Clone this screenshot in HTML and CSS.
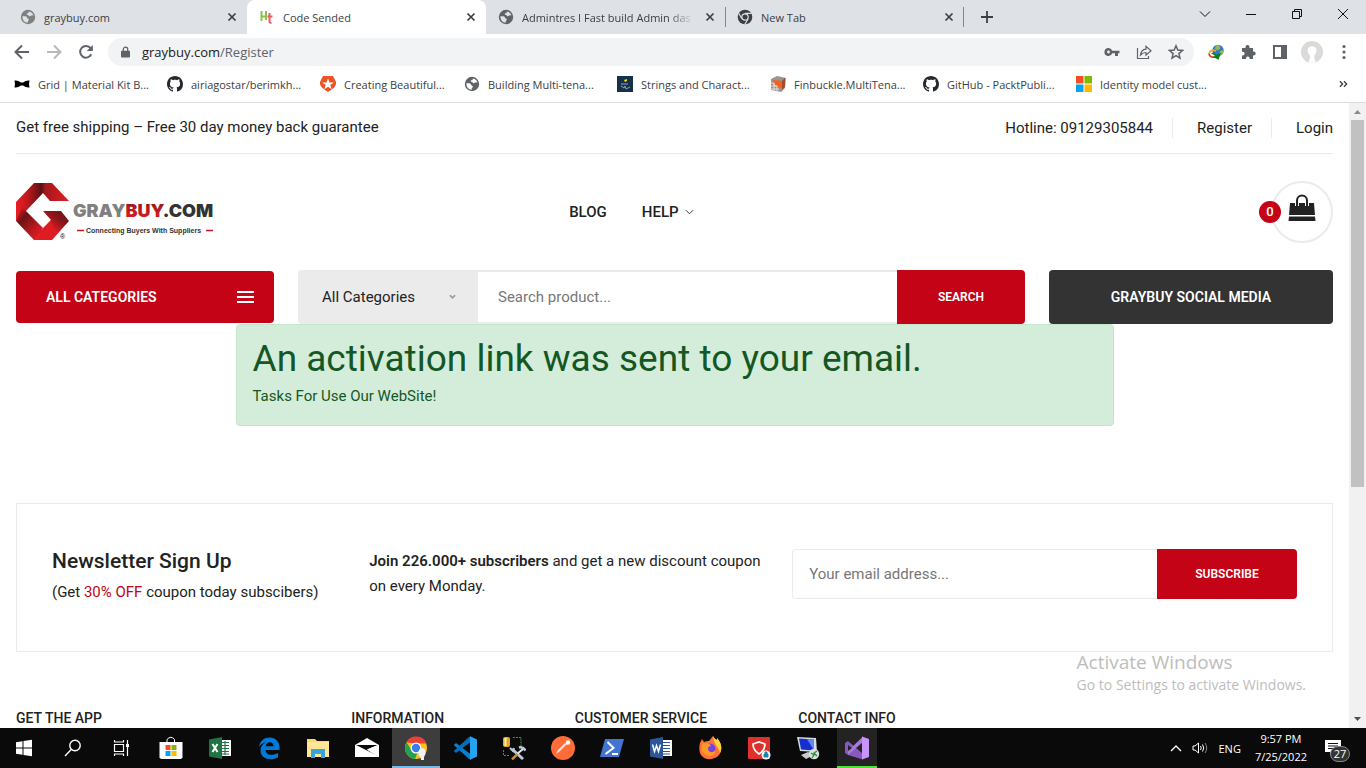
FILE: index.html
```html
<!DOCTYPE html>
<html lang="en">
<head>
    <meta charset="UTF-8">
    <meta name="viewport" content="width=device-width, initial-scale=1.0">
    <title>Code Sended</title>
    <link rel="stylesheet" href="styles.css">
</head>
<body>
    <!-- Shared icons -->
    <svg class="sprite" aria-hidden="true">
        <symbol id="globe" viewBox="0 0 16 16">
            <circle cx="8" cy="8" r="7.2" fill="currentColor"/>
            <path d="M2.300 7.200h3.200q1.500 0 1.500 1.500 0 .8 1 .8.800.2.800 1.200t-1 1.300v1.800Q2.600 13.600 2.300 7.200zM8.800 2.400q3.600.4 4.700 4.100-1.300-.7-2.300 0-.7 1-2.200.7-.2-1-1.200-1.100-1.300-.3-1-1.500.8-.7 1.800-.7z" fill="var(--hole)"/>
        </symbol>
        <symbol id="close" viewBox="0 0 10 10">
            <path d="M1.500 1.500l7 7M8.500 1.500l-7 7" stroke="currentColor" stroke-width="1.700" fill="none"/>
        </symbol>
        <symbol id="github" viewBox="0 0 16 16">
            <path fill="currentColor" d="M8 0C3.580 0 0 3.580 0 8c0 3.540 2.290 6.530 5.470 7.590.4.070.55-.17.55-.38 0-.19-.01-.82-.01-1.490-2.010.37-2.530-.49-2.690-.94-.09-.23-.48-.94-.82-1.130-.28-.15-.68-.52-.01-.53.63-.01 1.080.58 1.230.82.72 1.210 1.870.87 2.330.66.070-.52.28-.87.51-1.070-1.780-.2-3.640-.89-3.640-3.950 0-.87.31-1.590.82-2.150-.08-.2-.36-1.020.08-2.120 0 0 .67-.21 2.200.82.64-.18 1.320-.27 2-.27s1.360.09 2 .27c1.530-1.040 2.200-.82 2.200-.82.44 1.100.16 1.920.08 2.120.51.56.82 1.270.82 2.150 0 3.070-1.870 3.750-3.650 3.950.29.25.54.73.54 1.480 0 1.070-.01 1.930-.01 2.200 0 .21.15.46.55.38A8.010 8.010 0 0 0 16 8c0-4.420-3.580-8-8-8z"/>
        </symbol>
    </svg>

    <!-- Tabs -->
    <header class="tab-strip">
        <div class="tab">
            <svg class="icon muted"><use href="#globe"/></svg>
            <span class="tab-title">graybuy.com</span>
            <button class="tab-close" aria-label="Close tab"><svg><use href="#close"/></svg></button>
        </div>
        <div class="tab active">
            <svg class="icon" viewBox="0 0 16 16" fill="none" stroke-width="2">
                <path d="M2.500 2v10M2.500 7.500h5M7 2v9" stroke="#8bc34a"/>
                <path d="M10.500 4v8q0 2 2 2M8.500 7.500h5" stroke="#f0586b"/>
            </svg>
            <span class="tab-title">Code Sended</span>
            <button class="tab-close" aria-label="Close tab"><svg><use href="#close"/></svg></button>
        </div>
        <div class="tab">
            <svg class="icon"><use href="#globe"/></svg>
            <span class="tab-title fade">Admintres I Fast build Admin das</span>
            <button class="tab-close" aria-label="Close tab"><svg><use href="#close"/></svg></button>
        </div>
        <div class="tab divided">
            <svg class="icon" viewBox="0 0 16 16">
                <circle cx="8" cy="8" r="7.300" fill="#3c4043"/>
                <circle cx="8" cy="8" r="3.200" fill="#3c4043" stroke="#dee1e6" stroke-width="1.200"/>
                <path d="M8 4.400h6.500M4.900 9.800 1.700 4.300M11.100 9.800l-3.200 5.500" stroke="#dee1e6" stroke-width="1.200"/>
            </svg>
            <span class="tab-title">New Tab</span>
            <button class="tab-close" aria-label="Close tab"><svg><use href="#close"/></svg></button>
        </div>
        <button class="new-tab" aria-label="New tab">
            <svg viewBox="0 0 12 12"><path d="M6 0v12M0 6h12" stroke="#3c4043" stroke-width="1.800"/></svg>
        </button>
        <div class="window-buttons">
            <button aria-label="Search tabs"><svg viewBox="0 0 12 12"><path d="M1 3.500l5 5 5-5"/></svg></button>
            <button aria-label="Minimize"><svg viewBox="0 0 12 12"><path d="M1 6.500h10"/></svg></button>
            <button aria-label="Restore"><svg viewBox="0 0 12 12"><path d="M1.500 3.500h7v7h-7zM3.500 3.500v-2h7v7h-2"/></svg></button>
            <button aria-label="Close"><svg viewBox="0 0 12 12"><path d="M1 1l10 10M11 1L1 11"/></svg></button>
        </div>
    </header>

    <!-- Address bar -->
    <div class="toolbar">
        <button class="tool" aria-label="Back"><svg viewBox="0 0 16 16"><path d="M15 8H2M8 1.500L1.500 8 8 14.500"/></svg></button>
        <button class="tool disabled" aria-label="Forward"><svg viewBox="0 0 16 16"><path d="M1 8h13M8 1.500L14.500 8 8 14.500"/></svg></button>
        <button class="tool" aria-label="Reload"><svg viewBox="0 0 16 16"><path d="M13.200 10.300A5.800 5.800 0 1 1 12.500 4.200L14 5.800"/><path d="M14.800 1v6H8.800z" fill="#5f6368" stroke="none"/></svg></button>
        <div class="omnibox">
            <svg class="lock" viewBox="0 0 10 12"><path d="M1 4.500h8a1 1 0 0 1 1 1V11a1 1 0 0 1-1 1H1a1 1 0 0 1-1-1V5.500a1 1 0 0 1 1-1z" fill="#5f6368"/><path d="M2.500 5V3.200a2.500 2.500 0 0 1 5 0V5" fill="none" stroke="#5f6368" stroke-width="1.400"/></svg>
            <div class="url">graybuy.com<span>/Register</span></div>
            <div class="omnibox-icons">
                <svg viewBox="0 0 16 16"><path d="M4.500 4a4 4 0 1 0 3.700 5.300H11V12h3V9.300h1.500V6.700H8.200A4 4 0 0 0 4.500 4zm0 2.600a1.400 1.400 0 1 1 0 2.800 1.400 1.400 0 0 1 0-2.800z" fill="#5f6368" fill-rule="evenodd"/></svg>
                <svg viewBox="0 0 16 16" fill="none" stroke="#5f6368" stroke-width="1.200"><path d="M1.500 4v10.500h11V12M4.500 11c.5-4 2.500-5.500 5.500-5.800V2.300l5 4.500-5 4.400V8.500C7.500 8.500 6 9.300 4.500 11z"/></svg>
                <svg viewBox="0 0 16 16" fill="none" stroke="#5f6368" stroke-width="1.500"><path d="M8 1.800l1.800 4.300 4.700.4-3.600 3.100 1.100 4.600L8 11.700l-4 2.500 1.100-4.600-3.600-3.100 4.700-.4z"/></svg>
            </div>
        </div>
        <div class="extensions">
            <svg viewBox="0 0 16 16"><circle cx="10" cy="6.500" r="5.700" fill="#3a76c4"/><path d="M8 1.500l3-.5 1.500 3-2.500 2.500L7 5zM12 7l3.500-1-1 4-3 1z" fill="#8fc04a"/><path d="M1 9.500Q3 4.500 8 7" fill="none" stroke="#e8b020" stroke-width="1.800"/><path d="M.8 9.500Q2 14 7 13" fill="none" stroke="#d8402c" stroke-width="1.600"/><path d="M3 9.500q3-2 5 1.200l5-2-2.500 7L5 13l2-1q-2-2.500-4-2.500z" fill="#07811b"/></svg>
            <svg viewBox="0 0 16 16"><path d="M2 4h3.500V3a2 2 0 0 1 4 0v1H13v3.500h.7a2 2 0 0 1 0 4H13V15H9.600v-.8a1.800 1.800 0 0 0-3.600 0v.8H2v-3.500h.7a1.900 1.900 0 0 0 0-3.800H2z" fill="#5f6368"/></svg>
            <svg viewBox="0 0 16 16"><path d="M1 1h14v14H1zm2 2v10h6V3z" fill="#5f6368" fill-rule="evenodd"/></svg>
        </div>
        <svg class="profile" viewBox="0 0 22 22"><circle cx="11" cy="11" r="11" fill="#dadada"/><path d="M6.500 9a4.600 4.600 0 0 1 9 0q0 3.500-2.200 5.500v2.500l1.500 4.200q-4 1.200-7.500 0L9 17v-2.500Q6.500 12.500 6.500 9z" fill="#fff"/></svg>
        <button class="menu" aria-label="Menu"><svg viewBox="0 0 4 16"><circle cx="2" cy="2.500" r="1.600"/><circle cx="2" cy="8" r="1.600"/><circle cx="2" cy="13.500" r="1.600"/></svg></button>
    </div>

    <!-- Bookmarks -->
    <nav class="bookmarks">
        <a href="#"><svg class="icon" viewBox="0 0 16 16"><path fill="#000" d="M.5 4.500Q4 4 7 6.500h2Q12 4 15.500 4.500q-1 3.500 0 7Q12 12 9 9.500H7Q4 12 .5 11.500q1-3.500 0-7z"/></svg><span>Grid | Material Kit B...</span></a>
        <a href="#"><svg class="icon dark"><use href="#github"/></svg><span>airiagostar/berimkh...</span></a>
        <a href="#" class="narrow"><svg class="icon" viewBox="0 0 16 16"><path d="M3 0h10l3 6c.4 4-2 6.500-8 10C2 12.500-.4 10 0 6z" fill="#eb5424"/><path d="M8 2.500l1.500 4h4.300l-3.500 2.600 1.400 4.200L8 10.800l-3.700 2.500 1.400-4.200-3.500-2.600h4.300z" fill="#fff"/></svg><span>Creating Beautiful...</span></a>
        <a href="#"><svg class="icon on-white"><use href="#globe"/></svg><span>Building Multi-tena...</span></a>
        <a href="#"><svg class="icon" viewBox="0 0 16 16"><path fill="#16324b" d="M0 0h16v16H0z"/><path d="M7 4l3-1v2L8 6z" fill="#f0d430"/><path d="M4 8h7M4 10l3 2 1-2 1 3 4-2" stroke="#8ba3b5" fill="none"/></svg><span>Strings and Charact...</span></a>
        <a href="#"><svg class="icon" viewBox="0 0 16 16"><path d="M1 3l6-3 9 2-1 10-4 4-10-2z" fill="#9a958f"/><path d="M3 4l9 1v7l-9-1z" fill="#f26322"/><path d="M12 5l3-3v9l-3 3z" fill="#a44b2a"/><path d="M1 7h3v3h3v5M1 10h6M1 13h8M4 7v8" stroke="#ddd" fill="none"/></svg><span>Finbuckle.MultiTena...</span></a>
        <a href="#"><svg class="icon dark"><use href="#github"/></svg><span>GitHub - PacktPubli...</span></a>
        <a href="#"><svg class="icon" viewBox="0 0 16 16"><path fill="#f25022" d="M0 0h7.500v7.500H0z"/><path fill="#7fba00" d="M8.500 0H16v7.500H8.500z"/><path fill="#00a4ef" d="M0 8.500h7.500V16H0z"/><path fill="#ffb900" d="M8.500 8.500H16V16H8.500z"/></svg><span>Identity model cust...</span></a>
        <button class="more" aria-label="More bookmarks"><svg viewBox="0 0 10 8"><path d="M1 1l3 3-3 3M5.500 1l3 3-3 3" fill="none" stroke="#3c4043" stroke-width="1.500"/></svg></button>
    </nav>

    <!-- Web page -->
    <div class="viewport">
        <main class="page">
            <div class="topbar">
                <div>Get free shipping – Free 30 day money back guarantee</div>
                <div class="topbar-links">
                    <span>Hotline: 09129305844</span>
                    <a href="#">Register</a>
                    <a href="#">Login</a>
                </div>
            </div>

            <div class="site-header">
                <div class="logo">
                    <a href="#" aria-label="GrayBuy home">
                        <svg viewBox="0 0 202 58">
                            <defs>
                                <linearGradient id="top" x1="0" y1="0" x2="1" y2="0"><stop offset="0" stop-color="#ed1c24"/><stop offset=".2" stop-color="#c5191f"/><stop offset=".48" stop-color="#5a1013"/><stop offset=".55" stop-color="#a3171c"/><stop offset="1" stop-color="#e01e26"/></linearGradient>
                                <linearGradient id="side" x1="0" y1="0" x2="1" y2="1"><stop offset="0" stop-color="#ee1c24"/><stop offset=".3" stop-color="#6e1215"/><stop offset=".7" stop-color="#c41a20"/><stop offset="1" stop-color="#ed1c24"/></linearGradient>
                                <linearGradient id="bottom" x1="0" y1="1" x2="1" y2="0"><stop offset="0" stop-color="#ed1c24"/><stop offset=".45" stop-color="#e01c23"/><stop offset=".7" stop-color="#8a1519"/><stop offset="1" stop-color="#6a1114"/></linearGradient>
                                <linearGradient id="buy" x1="0" y1="0" x2="0" y2="1"><stop offset="0" stop-color="#8e161a"/><stop offset="1" stop-color="#ed1c24"/></linearGradient>
                            </defs>
                            <path d="M18 0h18l17 18H34l-7-8-17 18-10 10V19z" fill="url(#top)"/>
                            <path d="M0 38l6-13 4 3 17 17-5 12h-4z" fill="url(#side)"/>
                            <path d="M27 28h18l8 10-17 19H18l17-20z" fill="url(#bottom)"/>
                            <path d="M27 45l8-8 4 14-3 6H20z" fill="#e01c23"/>
                            <text class="logo-name" x="57" y="34"><tspan fill="#808080">GRAY</tspan><tspan fill="url(#buy)">BUY</tspan><tspan fill="#333">.COM</tspan></text>
                            <path d="M61 47.500h7M190 47.500h7" stroke="#c4161c" stroke-width="1.500"/>
                            <text class="logo-tag" x="70" y="50">Connecting Buyers With Suppliers</text>
                            <text class="logo-mark" x="44" y="56">®</text>
                        </svg>
                    </a>
                </div>
                <nav class="main-nav">
                    <a href="#">BLOG</a>
                    <a href="#">HELP <svg viewBox="0 0 10 6"><path d="M1 1l4 4 4-4"/></svg></a>
                </nav>
                <a href="#" class="cart" aria-label="Cart">
                    <span class="cart-count">0</span>
                    <svg viewBox="0 0 28 28"><path d="M2 9h24l1 12H1zM1 22.500h26l.5 4.500H.5z" fill="#222"/><path d="M9 12V6.500a5 5 0 0 1 10 0V12" fill="none" stroke="#fff" stroke-width="4"/><path d="M9 12V6.500a5 5 0 0 1 10 0V12" fill="none" stroke="#222" stroke-width="2"/></svg>
                </a>
            </div>

            <div class="search-row">
                <button class="categories">ALL CATEGORIES <svg viewBox="0 0 17 12"><path d="M0 1h17M0 6h17M0 11h17" stroke="#fff" stroke-width="2"/></svg></button>
                <form class="search">
                    <div class="search-category">
                        <select aria-label="Category"><option>All Categories</option></select>
                        <svg viewBox="0 0 8 6"><path d="M1 1l3 3 3-3" fill="none" stroke="#999" stroke-width="2"/></svg>
                    </div>
                    <input type="text" placeholder="Search product..." aria-label="Search product">
                    <button type="button">SEARCH</button>
                </form>
                <a href="#" class="social">GRAYBUY SOCIAL MEDIA</a>
            </div>

            <div class="alert" role="alert">
                <h1>An activation link was sent to your email.</h1>
                <p>Tasks For Use Our WebSite!</p>
            </div>

            <section class="newsletter">
                <div class="newsletter-title">
                    <h2>Newsletter Sign Up</h2>
                    <p>(Get <em>30% OFF</em> coupon today subscibers)</p>
                </div>
                <p class="newsletter-text"><strong>Join 226.000+ subscribers</strong> and get a new discount coupon on every Monday.</p>
                <form class="subscribe">
                    <input type="email" placeholder="Your email address..." aria-label="Your email address">
                    <button type="button">SUBSCRIBE</button>
                </form>
            </section>

            <footer class="site-footer">
                <h3>GET THE APP</h3>
                <h3>INFORMATION</h3>
                <h3>CUSTOMER SERVICE</h3>
                <h3>CONTACT INFO</h3>
            </footer>
        </main>
        <div class="scrollbar">
            <svg viewBox="0 0 7 4"><path d="M0 4l3.500-4L7 4z" fill="#8a8a8a"/></svg>
            <div class="scroll-thumb"></div>
            <svg viewBox="0 0 7 4"><path d="M0 0l3.500 4L7 0z" fill="#505050"/></svg>
        </div>
        <div class="watermark">
            <div class="watermark-title">Activate Windows</div>
            <div>Go to Settings to activate Windows.</div>
        </div>
    </div>

    <!-- Taskbar -->
    <footer class="taskbar">
        <div class="apps">
            <button aria-label="Start"><svg viewBox="0 0 24 24" fill="#fff"><path d="M4 6.200l6.500-1v6.300H4zM11.500 5l8.500-1.200v7.700h-8.500zM4 12.500h6.500v6.300L4 17.800zM11.500 12.500H20v7.700L11.500 19z"/></svg></button>
            <button aria-label="Search"><svg viewBox="0 0 24 24" fill="none" stroke="#fff" stroke-width="1.400"><circle cx="14" cy="9.500" r="5.200"/><path d="M10.200 13.500L4 20"/></svg></button>
            <button aria-label="Task View"><svg viewBox="0 0 24 24" fill="none" stroke="#fff" stroke-width="1.200"><path d="M4.500 8.500h9v7h-9zM4.500 4v2h9V4M4.500 20v-2h9v2M17.500 4v16"/><path d="M16 8h3v3h-3z" fill="#fff" stroke="none"/></svg></button>
            <button aria-label="Store"><svg viewBox="0 0 24 24"><path d="M8 7V3.500q4-4.500 7.500 0V7" fill="none" stroke="#fff"/><path d="M.5 6h23v15.500L22 23H2L.5 21.500z" fill="#fff"/><path fill="#f25022" d="M6.500 9h5v5h-5z"/><path fill="#7fba00" d="M12.500 9h5v5h-5z"/><path fill="#00a4ef" d="M6.500 15h5v5h-5z"/><path fill="#ffb900" d="M12.500 15h5v5h-5z"/></svg></button>
            <button aria-label="Excel"><svg viewBox="0 0 24 24"><path d="M13 4h10v16H13z" fill="#fff"/><path d="M13 6.500h8M13 9.500h8M13 12.500h8M13 15.500h8M13 18h8M17 5v14" stroke="#217346" stroke-width="1.200"/><path d="M1 3.500L14 1v22L1 20.500z" fill="#217346"/><path d="M4.500 8l5 8M9.500 8l-5 8" stroke="#fff" stroke-width="2"/></svg></button>
            <button aria-label="Edge"><svg viewBox="0 0 24 24"><path d="M2 11C3 4.500 7.500 1.500 12.500 1.500c6.500 0 10 4.500 10 10V14H8.500c.3 5.500 7.500 6 12.500 3v4.500C13 25.500 3.500 22.500 3.500 14.500c0-4 2-6.500 5.500-8C5.500 7 3.500 8.500 2 11zm6.700-.7h7.800c0-5.500-7-5.300-7.800 0z" fill="#0078d7"/></svg></button>
            <button aria-label="File Explorer"><svg viewBox="0 0 24 24"><path d="M1 3h8l2 2h12v16H1z" fill="#f8d775"/><path d="M1 6h22v15H1z" fill="#ffe694"/><path d="M5 22v-9h14v9h-4v-4H9v4z" fill="#35a5dd"/></svg></button>
            <button aria-label="Mail"><svg viewBox="0 0 24 24"><path d="M0 9l12-7 12 7v12H0z" fill="#fff"/><path d="M1 9h22l-11 4.500 8 5z" fill="#0a0a0a"/><path d="M23 9l-11 4.500 6 4z" fill="#fff"/></svg></button>
            <button class="current" aria-label="Chrome"><svg viewBox="0 0 24 24"><circle cx="12" cy="12" r="11" fill="#fbc116"/><path d="M2.500 6.500A11 11 0 0 1 22.500 7.500H12z" fill="#ea4335"/><path d="M2.500 6.500L8 14.500l5.500 2L11 23A11 11 0 0 1 2.500 6.500z" fill="#24a14d"/><circle cx="12" cy="12" r="5.500" fill="#fff"/><circle cx="12" cy="12" r="4.200" fill="#3b7ded"/><path d="M15 14q2.500-3 6-1l.5 5-1.500 3v3h-3l-.5-3-2-2z" fill="#f2f2f2"/></svg></button>
            <button aria-label="VS Code"><svg viewBox="0 0 24 24"><path d="M3 7l15 11.500v5L16 23 .8 9z" fill="#0a7fcf"/><path d="M3 17L18 5.500v-5L16 1 .8 15z" fill="#0070bb"/><path d="M17 .3L24 3.500v17l-7 3.200z" fill="#24a3f3"/></svg></button>
            <button aria-label="SQL Tools"><svg viewBox="0 0 24 24"><rect x="1" y="1" width="7" height="10" rx="2" fill="#e8a820"/><path d="M3.500 2v8" stroke="#fff2ad" stroke-width="2"/><path d="M11 1.500h8V10M1.500 14v5.500H8" fill="none" stroke="#37a035" stroke-dasharray="2 1"/><path d="M10 13l11 10" stroke="#b9cad7" stroke-width="3"/><path d="M21 13l-6 5" stroke="#dfe6ea" stroke-width="2"/><path d="M17 11.500q4-1 6.500 3" fill="none" stroke="#b9cad7" stroke-width="2.500"/><path d="M10 23.500l5.500-5.500" stroke="#c98b2c" stroke-width="2.500"/><path d="M8 12l3 3 1-3" fill="none" stroke="#b9cad7" stroke-width="2"/></svg></button>
            <button aria-label="Postman"><svg viewBox="0 0 24 24"><circle cx="12" cy="12" r="12" fill="#ff6c37"/><circle cx="17" cy="6.500" r="2.200" fill="#fff"/><path d="M16 8l-8 8-3 2 2-4 7-7z" fill="#ffe5da"/></svg></button>
            <button aria-label="PowerShell"><svg viewBox="0 0 24 24"><path d="M5 3h19l-5 18H0z" fill="#4274d0"/><path d="M7.500 6l6 6-8 6M12 18h6" fill="none" stroke="#fff" stroke-width="2"/></svg></button>
            <button aria-label="Word"><svg viewBox="0 0 24 24"><path d="M13 4h10v16H13z" fill="#fff"/><path d="M13 6.500h8M13 9.500h8M13 12.500h8M13 15.500h8M13 18h8" stroke="#2b579a"/><path d="M1 3.500L14 1v22L1 20.500z" fill="#2b579a"/><path d="M3.500 8.500l2 7 2-6 2 6 2-7" fill="none" stroke="#fff" stroke-width="1.500"/></svg></button>
            <button aria-label="Firefox"><svg viewBox="0 0 24 24"><path d="M2 7l2-4 2 3c2-1 4-1 5-1l4-5c1 2 2 3 4 4V2c6 7 5 13 2 17-4 5-14 6-18 0-2-3-2-8-1-12z" fill="#ff7139"/><path d="M15 0c1 2 2 3 4 4V2c5 5 5 11 3 15-1-6-6-7-7-17z" fill="#ffd43a"/><circle cx="12" cy="13" r="5.500" fill="#7542e5"/><path d="M4 8c4-2 8-1 9 2-2 0-3 1-3 3 0 3 5 5 7 1 1 7-10 8-13 1z" fill="#ff9a24"/></svg></button>
            <button aria-label="VPN"><svg viewBox="0 0 24 24"><rect x="1" y="1" width="22" height="22" rx="1" fill="#e0302c"/><path d="M6 8l6-2 6 2q0 6-6 10-6-4-6-10z" fill="none" stroke="#fff" stroke-width="1.700"/><circle cx="19" cy="19" r="4.500" fill="#fff"/><path d="M17 18h4v3h-4zM18 18v-2h2v2" fill="#1687a8" stroke="#1687a8"/></svg></button>
            <button aria-label="Remote Desktop"><svg viewBox="0 0 24 24"><path d="M1 1l19 1 1 14-17-1z" fill="#d9dde2"/><path d="M3 2.500l15 1v11l-13-1z" fill="#1630cd"/><path d="M11 3l7 .5v11z" fill="#5e88f3"/><path d="M5 19l7-3 6 3-8 4z" fill="#c7ccce"/><circle cx="18" cy="18" r="5.200" fill="#dce0dc"/><path d="M15 17l3 2-2 3M21 15l-3 2 3 3" fill="none" stroke="#2c8b37" stroke-width="1.300"/></svg></button>
            <button class="running" aria-label="Visual Studio"><svg viewBox="0 0 24 24"><path d="M0 7l3-2 15 13v5.500L3 19 0 17z" fill="#8758bd"/><path d="M3 19L18 6V.5L3 15z" fill="#a978df"/><path d="M17 .5L24 3v18l-7 2.500z" fill="#c894fa"/><path d="M3 9l4 3-4 3z" fill="#222"/></svg></button>
        </div>
        <div class="tray">
            <svg viewBox="0 0 12 8"><path d="M1 7l5-5 5 5" fill="none" stroke="#fff" stroke-width="1.400"/></svg>
            <svg class="volume" viewBox="0 0 16 14" fill="none" stroke="#fff"><path d="M1 5h2l3.500-3v10L3 9H1zM8.500 5q1.500 2 0 4M10.500 3.500q2.500 3.500 0 7"/><path d="M13 2q3.500 5 0 10" stroke="#888"/></svg>
            <span>ENG</span>
            <div class="clock">9:57 PM<br>7/25/2022</div>
            <div class="notifications">
                <svg viewBox="0 0 16 16"><path d="M0 0h16v12h-8l-3 3v-3H0z" fill="#fff"/><path d="M3 3.500h10M3 6h10M3 8.500h6" stroke="#111"/></svg>
                <span>27</span>
            </div>
        </div>
    </footer>
</body>
</html>
```
FILE: styles.css
```css
:root {
    --chrome: #dee1e6;
    --hole: #dee1e6;
    --icon: #5f6368;
    --red: #c40316;
    --dark: #222;
    --border: #ebebeb;
    --ui-font: 'Open Sans', 'Noto Sans', sans-serif;
    --page-font: Roboto, 'Liberation Sans', sans-serif;
}

* {
    box-sizing: border-box;
}

body {
    margin: 0;
    height: 100vh;
    display: flex;
    flex-direction: column;
    overflow: hidden;
    font-family: var(--ui-font);
    font-size: 11px;
    color: #3c4043;
    background: #fff;
}

button {
    font: inherit;
    color: inherit;
    border: none;
    background: none;
    padding: 0;
    cursor: pointer;
}

a {
    color: inherit;
    text-decoration: none;
}

svg {
    display: block;
    flex-shrink: 0;
}

h1, h2, h3, p {
    margin: 0;
    font-weight: 400;
}

.sprite {
    position: absolute;
    width: 0;
    height: 0;
}

.icon {
    width: 16px;
    height: 16px;
    color: var(--icon);
}

.icon.muted {
    color: #808080;
}

.icon.dark {
    color: #24292f;
}

.icon.on-white {
    --hole: #fff;
}

/* Tabs */
.tab-strip {
    display: flex;
    height: 34px;
    padding-left: 8px;
    background: var(--chrome);
}

.tab {
    display: flex;
    align-items: center;
    flex: 0 1 239px;
    min-width: 0;
    gap: 8px;
    padding: 0 7px 0 12px;
}

.tab.active {
    background: #fff;
    border-radius: 8px 8px 0 0;
}

.tab.divided {
    background: linear-gradient(#80868b, #80868b) left center / 1px 20px no-repeat,
        linear-gradient(#80868b, #80868b) right center / 1px 20px no-repeat;
}

.tab-title {
    flex: 1;
    overflow: hidden;
    white-space: nowrap;
}

.tab-title.fade {
    mask-image: linear-gradient(to right, #000 85%, transparent);
}

.tab-close svg {
    width: 10px;
    height: 10px;
}

.tab-close {
    padding: 3px;
}

.new-tab {
    padding: 0 17px;
}

.new-tab svg {
    width: 12px;
    height: 12px;
}

.window-buttons {
    display: flex;
    margin-left: auto;
}

.window-buttons button {
    width: 46px;
    height: 28px;
    display: flex;
    align-items: center;
    justify-content: center;
}

.window-buttons svg {
    width: 12px;
    height: 12px;
    fill: none;
    stroke: #111;
}

/* Address bar */
.toolbar {
    display: flex;
    align-items: center;
    height: 36px;
    padding: 0 14px;
}

.tool {
    width: 32px;
}

.tool svg {
    width: 16px;
    height: 16px;
    fill: none;
    stroke: var(--icon);
    stroke-width: 2;
}

.tool.disabled {
    opacity: 0.45;
}

.omnibox {
    flex: 1;
    display: flex;
    align-items: center;
    gap: 12px;
    height: 28px;
    margin: 0 12px 0 -2px;
    padding: 0 10px 0 13px;
    border-radius: 14px;
    background: #f1f3f4;
}

.lock {
    width: 9px;
    height: 12px;
}

.url {
    flex: 1;
    font-size: 13px;
    color: #202124;
}

.url span {
    color: var(--icon);
}

.omnibox-icons {
    display: flex;
    gap: 16px;
}

.omnibox-icons svg, .extensions svg {
    width: 16px;
    height: 16px;
}

.extensions {
    display: flex;
    gap: 16px;
    margin-left: 2px;
}

.profile {
    width: 22px;
    height: 22px;
    margin: 0 19px 0 13px;
}

.menu svg {
    width: 4px;
    height: 16px;
    fill: var(--icon);
}

.menu {
    padding-right: 6px;
}

/* Bookmarks */
.bookmarks {
    display: flex;
    align-items: center;
    height: 33px;
    padding: 0 18px 4px 14px;
    border-bottom: 1px solid #dadce0;
}

.bookmarks a {
    display: flex;
    align-items: center;
    gap: 8px;
    width: 153px;
    height: 28px;
    white-space: nowrap;
}

.bookmarks a.narrow {
    width: 144px;
}

.more {
    margin-left: auto;
}

.more svg {
    width: 9px;
    height: 8px;
}

/* Web page */
.viewport {
    position: relative;
    flex: 1;
    min-height: 0;
    display: flex;
}

.page {
    flex: 1;
    min-width: 0;
    overflow: hidden;
    padding: 0 16px;
    font-family: var(--page-font);
    font-size: 15px;
    line-height: 25px;
    color: var(--dark);
}

.topbar {
    display: flex;
    align-items: center;
    justify-content: space-between;
    height: 51px;
    padding-bottom: 1px;
    border-bottom: 1px solid var(--border);
}

.topbar-links {
    display: flex;
    line-height: 20px;
}

.topbar-links a {
    margin-left: 19px;
    padding-left: 24px;
    border-left: 1px solid var(--border);
}

/* Logo, menu and cart */
.site-header {
    display: flex;
    align-items: center;
    height: 116px;
}

.logo {
    width: 42%;
}

.logo a {
    display: block;
    width: fit-content;
}

.logo svg {
    width: 202px;
    height: 58px;
}

.logo-name {
    font: 900 18px Inter, sans-serif;
}

.logo-tag {
    font: bold 7px 'Liberation Sans', sans-serif;
    fill: #333;
}

.logo-mark {
    font: 7px 'Liberation Sans', sans-serif;
}

.main-nav {
    display: flex;
    gap: 35px;
    font-weight: 500;
}

.main-nav a {
    display: flex;
    align-items: center;
    gap: 6px;
}

.main-nav svg {
    width: 9px;
    height: 6px;
    fill: none;
    stroke: var(--dark);
}

.cart {
    position: relative;
    width: 62px;
    height: 62px;
    margin-left: auto;
    border: 2px solid var(--border);
    border-radius: 50%;
    display: flex;
    justify-content: center;
    padding-top: 11px;
}

.cart svg {
    width: 28px;
    height: 28px;
}

.cart-count {
    position: absolute;
    left: -14px;
    top: 18px;
    width: 22px;
    height: 22px;
    border-radius: 50%;
    background: var(--red);
    color: #fff;
    font-size: 13px;
    font-weight: 500;
    line-height: 22px;
    text-align: center;
}

/* Search */
.search-row {
    display: flex;
    align-items: center;
    gap: 24px;
    height: 54px;
}

.categories {
    display: flex;
    align-items: center;
    justify-content: space-between;
    width: 258px;
    height: 52px;
    padding: 0 20px 0 30px;
    border-radius: 4px;
    background: var(--red);
    color: #fff;
    font-size: 14px;
    font-weight: 600;
}

.categories svg {
    width: 17px;
    height: 12px;
}

.search {
    flex: 1;
    display: flex;
    height: 54px;
}

.search-category {
    display: flex;
    align-items: center;
    width: 180px;
    padding: 0 22px 0 24px;
    border-radius: 4px 0 0 4px;
    background: var(--border);
}

.search-category select {
    flex: 1;
    min-width: 0;
    appearance: none;
    border: none;
    padding: 0;
    background: none;
    font: inherit;
    color: inherit;
}

.search-category svg {
    width: 7px;
    height: 6px;
}

.search input, .subscribe input {
    flex: 1;
    min-width: 0;
    border: 2px solid var(--border);
    border-width: 2px 0;
    padding: 0 20px;
    font: inherit;
    color: inherit;
    outline: none;
}

input::placeholder {
    color: #777;
}

.search button, .subscribe button {
    width: 128px;
    border-radius: 0 4px 4px 0;
    background: var(--red);
    color: #fff;
    font-size: 12px;
    font-weight: 600;
}

.social {
    width: 284px;
    border-radius: 4px;
    background: #333;
    color: #fff;
    font-size: 14px;
    font-weight: 600;
    line-height: 54px;
    text-align: center;
}

/* Message */
.alert {
    width: 66.6667%;
    margin: 0 auto 77px;
    padding: 13px 16px 16px;
    border: 1px solid #c3e6cb;
    border-radius: 4px;
    background: #d4edda;
    color: #155724;
}

.alert h1 {
    margin-bottom: 4px;
    font-size: 37px;
    line-height: 42px;
}

/* Newsletter */
.newsletter {
    display: grid;
    grid-template-columns: repeat(12, 1fr);
    column-gap: 24px;
    padding: 45px 35px;
    min-height: 149px;
    border: 1px solid var(--border);
}

.newsletter-title {
    grid-column: span 3;
}

.newsletter-title h2 {
    margin-bottom: 6px;
    font-size: 21px;
    font-weight: 500;
}

.newsletter-title em {
    font-style: normal;
    color: var(--red);
}

.newsletter-text {
    grid-column: span 4;
}

.newsletter-text strong {
    font-weight: 600;
}

.subscribe {
    grid-column: span 5;
    display: flex;
    height: 50px;
}

.subscribe input {
    border-width: 1px 0 1px 1px;
    border-radius: 4px 0 0 4px;
    padding: 0 16px;
}

.subscribe button {
    width: 140px;
}

/* Footer */
.site-footer {
    display: grid;
    grid-template-columns: repeat(12, 1fr);
    column-gap: 24px;
    padding-top: 54px;
}

.site-footer h3 {
    grid-column: span 2;
    font-size: 14px;
    font-weight: 500;
    white-space: nowrap;
}

.site-footer h3:first-child {
    grid-column: span 3;
}

/* Scrollbar */
.scrollbar {
    width: 17px;
    display: flex;
    flex-direction: column;
    align-items: center;
    justify-content: space-between;
    padding: 7px 0;
    background: #f1f1f1;
}

.scrollbar svg {
    width: 7px;
    height: 4px;
}

.scroll-thumb {
    width: 13px;
    height: 60%;
    margin: 6px 0 auto;
    background: #c1c1c1;
}

.watermark {
    position: absolute;
    right: 60px;
    bottom: 33px;
    color: #bdbdbd;
    font-size: 14px;
    line-height: 20px;
}

.watermark-title {
    font-size: 19px;
    line-height: 26px;
}

/* Taskbar */
.taskbar {
    display: flex;
    justify-content: space-between;
    height: 40px;
    background: #0a0a0a;
    color: #fff;
}

.apps {
    display: flex;
    gap: 1px;
}

.apps button {
    display: flex;
    align-items: center;
    justify-content: center;
    width: 48px;
    border-bottom: 2px solid transparent;
    border-top: 2px solid transparent;
}

.apps svg {
    width: 24px;
    height: 24px;
}

.apps .current {
    background: #3d3d3d;
    border-color: #3d3d3d #3d3d3d #76b9ed;
}

.apps .running {
    width: 40px;
    margin-left: 4px;
    background: #232323;
    border-color: #232323 #232323 #4be337;
}

.tray {
    display: flex;
    align-items: center;
    gap: 10px;
    padding-right: 25px;
}

.tray svg {
    width: 12px;
    height: 8px;
}

.tray .volume {
    width: 16px;
    height: 14px;
}

.clock {
    margin: 0 8px 0 4px;
    line-height: 18px;
    text-align: center;
}

.notifications {
    position: relative;
}

.tray .notifications svg {
    width: 16px;
    height: 16px;
}

.notifications span {
    position: absolute;
    left: 5px;
    top: 6px;
    width: 20px;
    height: 16px;
    border: 1px solid #888;
    border-radius: 8px;
    background: #333;
    font-size: 11px;
    line-height: 14px;
    text-align: center;
}
```
